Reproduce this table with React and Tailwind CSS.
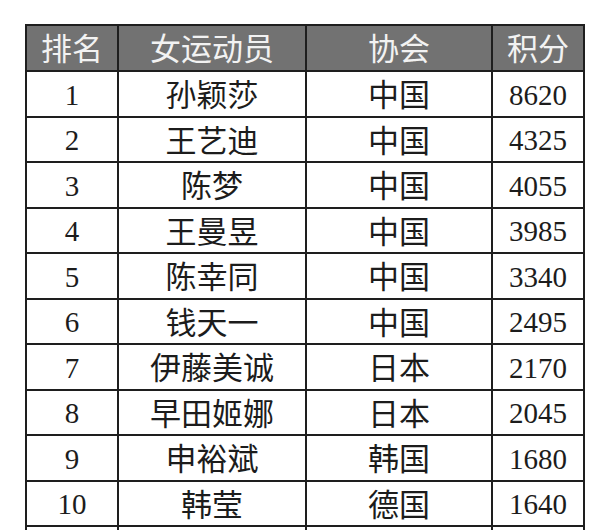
import React from 'react';

const rows = [
  ['1', '孙颖莎', '中国', '8620'],
  ['2', '王艺迪', '中国', '4325'],
  ['3', '陈梦', '中国', '4055'],
  ['4', '王曼昱', '中国', '3985'],
  ['5', '陈幸同', '中国', '3340'],
  ['6', '钱天一', '中国', '2495'],
  ['7', '伊藤美诚', '日本', '2170'],
  ['8', '早田姬娜', '日本', '2045'],
  ['9', '申裕斌', '韩国', '1680'],
  ['10', '韩莹', '德国', '1640'],
  ['', '', '', ''],
];

export default function App() {
  return (
    <div className="w-[600px] h-[530px] overflow-hidden bg-white pt-[24px] pl-[25px]">
      <table
        className="table-fixed border-collapse text-[29px] leading-none text-[#1c1c1c]"
        style={{ fontFamily: '"Liberation Serif", "Noto Sans CJK SC", serif' }}
      >
        <colgroup>
          <col className="w-[92px]" />
          <col className="w-[188px]" />
          <col className="w-[186px]" />
          <col className="w-[92px]" />
        </colgroup>
        <thead>
          <tr className="h-[46px] bg-[#727272] text-[#f2f2f2] text-[31px]">
            <th className="border-2 border-[#1e1e1e] font-normal pt-[2px]">排名</th>
            <th className="border-2 border-[#1e1e1e] font-normal pt-[2px]">女运动员</th>
            <th className="border-2 border-[#1e1e1e] font-normal pt-[2px]">协会</th>
            <th className="border-2 border-[#1e1e1e] font-normal pt-[2px]">积分</th>
          </tr>
        </thead>
        <tbody>
          {rows.map((r, i) => (
            <tr key={i} className="h-[45.5px]">
              <td className="border-2 border-[#1e1e1e] text-center pt-[3px]">{r[0]}</td>
              <td className="border-2 border-[#1e1e1e] text-center pt-[4px] text-[31px]">{r[1]}</td>
              <td className="border-2 border-[#1e1e1e] text-center pt-[4px] text-[31px]">{r[2]}</td>
              <td className="border-2 border-[#1e1e1e] text-center pt-[3px]">{r[3]}</td>
            </tr>
          ))}
        </tbody>
      </table>
    </div>
  );
}
